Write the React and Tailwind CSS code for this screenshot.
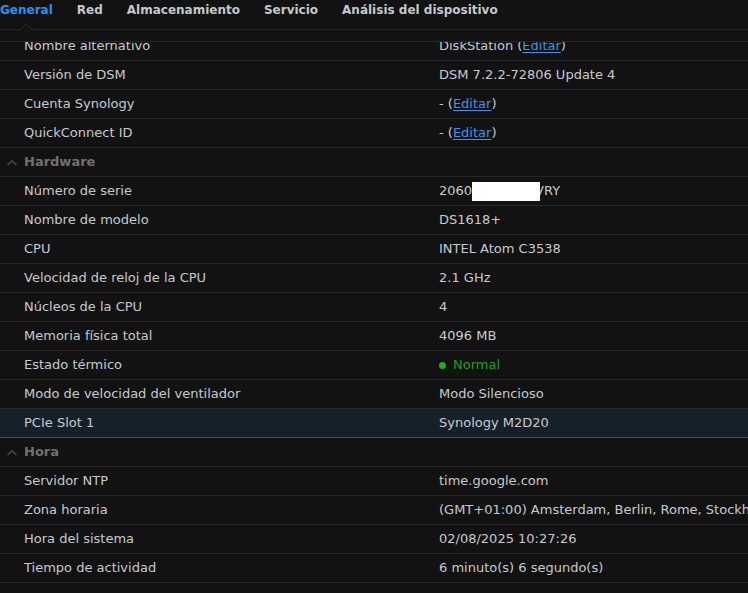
import React from "react";

const Link = () => (
  <span>
    - (<span className="text-[#3b95ec] underline underline-offset-2">Editar</span>)
  </span>
);

const Row = ({ label, value, highlight }) => (
  <div
    className={`flex h-[29px] items-center border-b ${
      highlight ? "bg-[#162029] border-[#4a4f55]" : "border-[#272727]"
    }`}
  >
    <div className="w-[439px] shrink-0 pl-[24px] whitespace-nowrap">{label}</div>
    <div className="whitespace-nowrap">{value}</div>
  </div>
);

const Header = ({ title }) => (
  <div className="flex h-[29px] items-center border-b border-[#272727]">
    <svg width="24" height="29" viewBox="0 0 24 29" className="shrink-0">
      <path d="M7.5 17 L12 13 L16.5 17" stroke="#4a4a4a" strokeWidth="1.6" fill="none" />
    </svg>
    <span className="font-bold text-[#707070]">{title}</span>
  </div>
);

export default function App() {
  const tabs = ["General", "Red", "Almacenamiento", "Servicio", "Análisis del dispositivo"];
  return (
    <div
      className="w-[748px] h-[593px] bg-[#121212] overflow-hidden flex flex-col text-[13px] text-[#c6cad0]"
      style={{ fontFamily: '"DejaVu Sans", Verdana, sans-serif' }}
    >
      <div className="relative h-[30px] shrink-0 border-b border-[#262626] flex items-start pt-[1px] gap-[24px] font-bold text-[12px] text-[#c4c8cd]">
        {tabs.map((t, i) => (
          <div key={t} className={i === 0 ? "text-[#2d8ff0]" : ""}>
            {t}
          </div>
        ))}
        <svg className="absolute left-[19px] top-[24px]" width="14" height="7" viewBox="0 0 14 7">
          <path d="M0 6.5 L7 0.5 L14 6.5" stroke="#2e2e2e" strokeWidth="1" fill="#121212" />
        </svg>
      </div>
      <div className="h-[11px] shrink-0" />
      <div className="flex-1 overflow-hidden border-t border-[#272727]">
        <div className="-mt-[10px]">
          <Row label="Nombre alternativo" value={<span>DiskStation (<span className="text-[#3b95ec] underline underline-offset-2">Editar</span>)</span>} />
          <Row label="Versión de DSM" value="DSM 7.2.2-72806 Update 4" />
          <Row label="Cuenta Synology" value={<Link />} />
          <Row label="QuickConnect ID" value={<Link />} />
          <Header title="Hardware" />
          <Row
            label="Número de serie"
            value={
              <span className="flex items-center">
                <span>2060</span>
                <span className="relative z-10 inline-block w-[68px] h-[19px] bg-white" />
                <span className="-ml-[5px]">VRY</span>
              </span>
            }
          />
          <Row label="Nombre de modelo" value="DS1618+" />
          <Row label="CPU" value="INTEL Atom C3538" />
          <Row label="Velocidad de reloj de la CPU" value="2.1 GHz" />
          <Row label="Núcleos de la CPU" value="4" />
          <Row label="Memoria física total" value="4096 MB" />
          <Row
            label="Estado térmico"
            value={
              <span className="flex items-center gap-[7px] text-[#1c9e1c]">
                <span className="w-[7px] h-[7px] rounded-full bg-[#1fae1f]" />
                Normal
              </span>
            }
          />
          <Row label="Modo de velocidad del ventilador" value="Modo Silencioso" />
          <Row label="PCIe Slot 1" value="Synology M2D20" highlight />
          <Header title="Hora" />
          <Row label="Servidor NTP" value="time.google.com" />
          <Row label="Zona horaria" value="(GMT+01:00) Amsterdam, Berlin, Rome, Stockholm, Vienna" />
          <Row label="Hora del sistema" value="02/08/2025 10:27:26" />
          <Row label="Tiempo de actividad" value="6 minuto(s) 6 segundo(s)" />
        </div>
      </div>
    </div>
  );
}
